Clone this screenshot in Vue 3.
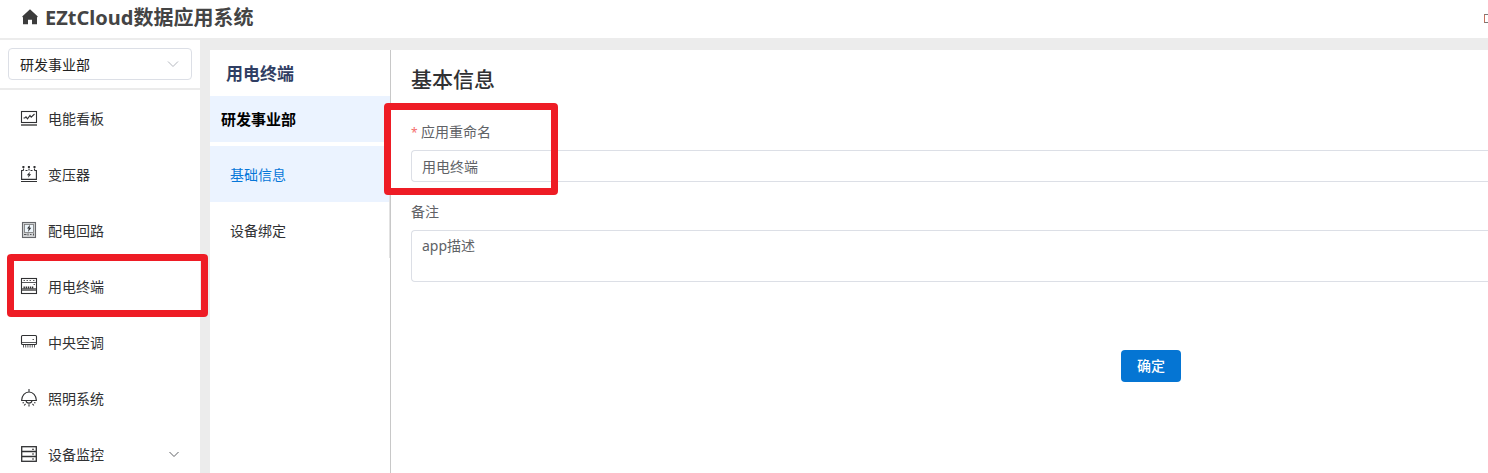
<script setup>
const menu = [
  { label: '电能看板', icon: 'board' },
  { label: '变压器', icon: 'transformer' },
  { label: '配电回路', icon: 'circuit' },
  { label: '用电终端', icon: 'terminal', marked: true },
  { label: '中央空调', icon: 'air' },
  { label: '照明系统', icon: 'lamp' },
  { label: '设备监控', icon: 'monitor', expandable: true },
]
</script>

<template>
  <div class="page">
    <header class="header">
      <svg class="home" viewBox="0 0 16 16"><path d="M8 .3.2 7.500 1 8.500v6.800h5v-4.500h4v4.500h5V8.500l.8-1z" fill="#3c3c3c" /></svg>
      <h1>EZtCloud数据应用系统</h1>
      <span class="corner"></span>
    </header>
    <div class="body">
      <aside class="sidebar">
        <div class="select-wrap">
          <div class="select">
            <span>研发事业部</span>
            <svg class="chev light" viewBox="0 0 12 8"><path d="M1 1.500l5 5 5-5" /></svg>
          </div>
        </div>
        <nav>
          <div v-for="item in menu" :key="item.label" class="item">
            <svg class="icon" viewBox="0 0 16 16">
              <template v-if="item.icon === 'board'">
                <rect x=".5" y="1.500" width="15" height="11" />
                <path d="M2.500 8h1.300L5 6.800l1.500 2L9 5.500l1.200 1.700L13.500 4" />
                <path class="gray" d="M0 15h16" />
              </template>
              <template v-else-if="item.icon === 'transformer'">
                <path d="M2.500 4.500H.6v8.900h14.800V4.500h-1.900M4.500 4.500H6.500M9.500 4.500h2M2.500 2.500v2M8 2.500v2M13.500 2.500v2M0 15.500h16" />
                <path class="thick" d="M1.400 1h2M6.900 1h2M12.500 1h2" />
                <path class="solid" d="M8.900 5.800L5.800 9.300h1.800l-.6 2.500L10.200 8.300H8.400z" />
              </template>
              <template v-else-if="item.icon === 'circuit'">
                <rect class="panel" x="1.500" y=".5" width="13" height="15" />
                <rect class="screen" x="3.500" y="2.500" width="9" height="8" />
                <path class="solid" d="M9 2.800L6 6.600h1.700L7 10l3.300-4.300H8.500z" />
                <path class="thin" d="M3 12.500h2.500M7 11.500v2M9 12.500h1.500M12.500 11.500v2" />
              </template>
              <template v-else-if="item.icon === 'terminal'">
                <rect x=".5" y=".5" width="15" height="15" />
                <path class="thin" d="M2.500 2.500h1.500M5.500 2.500H7M8.500 2.500H10M12 2.500h1.500M1 4.500h14M12.500 6.500H14" />
                <path class="gray wide" d="M1 11.500h14" />
                <path class="teeth" d="M2.500 9.500h10" />
              </template>
              <template v-else-if="item.icon === 'air'">
                <rect x=".5" y="1.500" width="15" height="9" rx="1" />
                <path class="thin" d="M1 8.500h14M11.500 5.500H13M2.500 11v2.500M4.700 11v2.500M6.900 11v2.500M9.100 11v2.500M11.300 11v2.500M13.500 11v2.500" />
              </template>
              <template v-else-if="item.icon === 'lamp'">
                <path d="M8-1v3M.6 10.500C.8 5.500 4 2 8 2s7.200 3.500 7.400 8.500zM5 10.700c.5 3.200 5.500 3.200 6 0" />
                <path d="M1.500 12.700H3M3.200 15.500l1.300-1.600M8 14.200v2.300M12.800 15.500l-1.300-1.600M14.500 12.700H13" />
              </template>
              <template v-else>
                <rect class="rack" x=".7" y=".7" width="14.600" height="14.600" />
                <path class="rack" d="M1 5.500h14M1 10.500h14" />
                <path d="M11 3.200h2M11 8h2M11 13h2" />
              </template>
            </svg>
            <span class="label">{{ item.label }}</span>
            <svg v-if="item.expandable" class="chev" viewBox="0 0 12 8"><path d="M1.500 2l4.500 4.500L10.500 2" /></svg>
            <i v-if="item.marked" class="mark mark-menu"></i>
          </div>
        </nav>
      </aside>
      <main class="content">
        <section class="subnav">
          <h2>用电终端</h2>
          <div class="group">研发事业部</div>
          <div class="submenu">
            <div class="sub active">基础信息</div>
            <div class="sub">设备绑定</div>
          </div>
        </section>
        <section class="form">
          <h3>基本信息</h3>
          <label class="first"><b>*</b>应用重命名</label>
          <div class="input">用电终端</div>
          <label class="second">备注</label>
          <div class="area">app描述</div>
          <button>确定</button>
          <i class="mark mark-form"></i>
        </section>
      </main>
    </div>
  </div>
</template>

<style>
body { overflow: hidden; }
</style>

<style scoped>
* { box-sizing: border-box; }
.page {
  width: 1488px; height: 473px; overflow: hidden; background: #ececec;
  font: 14px/20px "Noto Sans", "Noto Sans CJK SC", sans-serif; color: #303133;
}
.header { height: 38px; background: #fff; display: flex; align-items: center; padding: 0 0 4px 22px; }
.home { width: 16px; height: 16px; margin-right: 7px; }
h1 { margin: 0; padding-top: 1px; font-size: 20px; line-height: 28px; font-weight: 700; color: #444; white-space: nowrap; }
.corner { margin: 2px 0 0 auto; width: 4px; height: 9px; border: 1px solid #777; border-left-color: #c5705c; border-right: 0; }
.body { display: flex; height: 435px; }
.sidebar { width: 200px; margin-top: 2px; background: #fff; flex: none; }
.select-wrap { height: 50px; padding: 8px 8px 0; border-bottom: 2px solid #ebebeb; }
.select { height: 32px; border: 1px solid #dcdfe6; border-radius: 4px; padding: 0 12px 0 11px; display: flex; align-items: center; justify-content: space-between; color: #222; }
.select span { padding-top: 2px; }
.chev { width: 12px; height: 8px; fill: none; stroke: #606266; stroke-width: 1; }
.light { stroke: #b4b8bf; }
.item { height: 56px; display: flex; align-items: center; padding: 0 20px 0 21px; position: relative; }
.item > .chev { margin-left: auto; }
.label { padding-top: 2px; }
.icon { width: 16px; height: 16px; margin-right: 11px; fill: none; stroke: #303133; stroke-width: 1.1; overflow: visible; }
.gray { stroke: #777; stroke-width: 2; }
.wide { stroke-width: 3; }
.thick { stroke-width: 1.8; }
.thin { stroke-width: .8; }
.solid { fill: #303133; stroke: none; }
.panel { fill: #d2d4d6; stroke: #66686c; }
.screen { fill: #edf5fb; stroke: #777; stroke-width: .8; }
.teeth { stroke-width: 2; stroke-dasharray: 1.4 .7; }
.rack { stroke-width: 1.3; }
.mark { position: absolute; border: 7px solid #ee1c25; border-radius: 4px; z-index: 3; }
.mark-menu { left: 7px; top: -4px; width: 201px; height: 63px; }
.mark-form { left: -7px; top: 53px; width: 174px; height: 92px; }
.content { flex: 1; margin: 12px 0 0 10px; background: #fff; display: flex; }
.subnav { width: 181px; border-right: 1px solid #c8c8c8; }
h2 { margin: 0; height: 46px; padding-left: 16px; font-size: 17px; line-height: 47px; font-weight: 600; color: #303e63; }
.group { height: 46px; background: #ebf3ff; padding-left: 11px; font-size: 15px; line-height: 47px; font-weight: 700; color: #000; }
.submenu { margin-top: 4px; border-right: 1px solid #e2e2e2; }
.sub { height: 56px; line-height: 58px; padding-left: 20px; }
.active { background: #ebf3ff; color: #0677d9; }
.form { flex: 1; position: relative; padding-left: 20px; display: flex; flex-direction: column; color: #606266; }
h3 { margin: 14px 0 0; font-size: 21px; line-height: 30px; font-weight: 500; color: #303133; }
.first { margin-top: 27px; line-height: 22px; }
.first b { display: inline-block; width: 10px; font-size: 12px; color: #f56c6c; font-weight: 400; line-height: 20px; }
.input { margin-top: 7px; height: 32px; border: 1px solid #dcdfe6; border-right: 0; border-radius: 4px 0 0 4px; padding-left: 10px; line-height: 32px; }
.second { margin-top: 20px; line-height: 20px; }
.area { margin-top: 8px; height: 52px; border: 1px solid #dcdfe6; border-right: 0; border-radius: 4px 0 0 4px; padding: 5px 10px; }
button { margin: 68px 0 0 710px; width: 60px; height: 32px; padding: 0; border: 0; border-radius: 4px; background: #0575d3; color: #fff; font: 500 14px/32px "Noto Sans", "Noto Sans CJK SC", sans-serif; }
</style>
